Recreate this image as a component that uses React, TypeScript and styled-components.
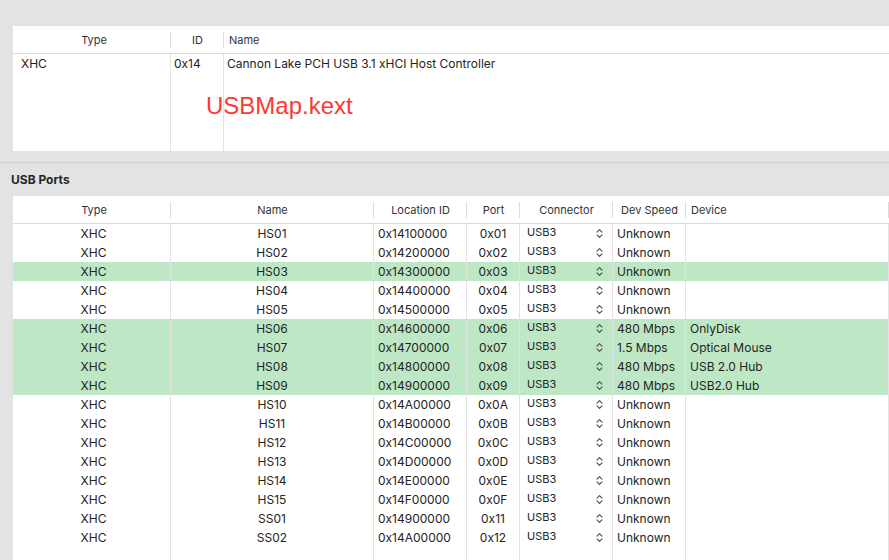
import React from 'react';
import styled, { createGlobalStyle } from 'styled-components';

const GlobalStyle = createGlobalStyle`
  html, body {
    margin: 0;
    padding: 0;
    background: #e3e3e3;
  }
  body {
    font-family: Inter, "Noto Sans", "Liberation Sans", sans-serif;
    -webkit-font-smoothing: antialiased;
  }
`;

type Port = {
  name: string;
  location: string;
  port: string;
  speed: string;
  device: string;
  active?: boolean;
};

const ports: Port[] = [
  { name: 'HS01', location: '0x14100000', port: '0x01', speed: 'Unknown', device: '' },
  { name: 'HS02', location: '0x14200000', port: '0x02', speed: 'Unknown', device: '' },
  { name: 'HS03', location: '0x14300000', port: '0x03', speed: 'Unknown', device: '', active: true },
  { name: 'HS04', location: '0x14400000', port: '0x04', speed: 'Unknown', device: '' },
  { name: 'HS05', location: '0x14500000', port: '0x05', speed: 'Unknown', device: '' },
  { name: 'HS06', location: '0x14600000', port: '0x06', speed: '480 Mbps', device: 'OnlyDisk', active: true },
  { name: 'HS07', location: '0x14700000', port: '0x07', speed: '1.5 Mbps', device: 'Optical Mouse', active: true },
  { name: 'HS08', location: '0x14800000', port: '0x08', speed: '480 Mbps', device: 'USB 2.0 Hub', active: true },
  { name: 'HS09', location: '0x14900000', port: '0x09', speed: '480 Mbps', device: 'USB2.0 Hub', active: true },
  { name: 'HS10', location: '0x14A00000', port: '0x0A', speed: 'Unknown', device: '' },
  { name: 'HS11', location: '0x14B00000', port: '0x0B', speed: 'Unknown', device: '' },
  { name: 'HS12', location: '0x14C00000', port: '0x0C', speed: 'Unknown', device: '' },
  { name: 'HS13', location: '0x14D00000', port: '0x0D', speed: 'Unknown', device: '' },
  { name: 'HS14', location: '0x14E00000', port: '0x0E', speed: 'Unknown', device: '' },
  { name: 'HS15', location: '0x14F00000', port: '0x0F', speed: 'Unknown', device: '' },
  { name: 'SS01', location: '0x14900000', port: '0x11', speed: 'Unknown', device: '' },
  { name: 'SS02', location: '0x14A00000', port: '0x12', speed: 'Unknown', device: '' },
];

const CONTROLLER_COLS = '158px 53px 1fr';
const PORT_COLS = '158px 203px 93px 53px 93px 73px 203px';

function UpDown() {
  return (
    <svg width="7" height="11" viewBox="0 0 7 11" fill="none">
      <polyline points="1,4.2 3.5,1.7 6,4.2" stroke="#4a4a4a" strokeWidth="1.1" strokeLinecap="round" strokeLinejoin="round" />
      <polyline points="1,6.8 3.5,9.3 6,6.8" stroke="#4a4a4a" strokeWidth="1.1" strokeLinecap="round" strokeLinejoin="round" />
    </svg>
  );
}

function App() {
  return (
    <Window>
      <GlobalStyle />
      <ControllerPanel>
        <HeaderRow $cols={CONTROLLER_COLS}>
          <HeadCell $shift={4}>Type</HeadCell>
          <HeadCell>ID</HeadCell>
          <HeadCell $align="left" $last>Name</HeadCell>
        </HeaderRow>
        <Body $cols={CONTROLLER_COLS} $rows={1}>
          <Cell $align="left" $pad={8}>XHC</Cell>
          <Cell $align="left" $pad={3}>0x14</Cell>
          <Cell $align="left" $pad={3} $last>Cannon Lake PCH USB 3.1 xHCI Host Controller</Cell>
          <Filler />
          <Filler />
          <Filler $last />
        </Body>
        <KextNote>USBMap.kext</KextNote>
      </ControllerPanel>

      <SectionTitle>USB Ports</SectionTitle>

      <PortsPanel>
        <HeaderRow $cols={PORT_COLS}>
          <HeadCell $shift={4}>Type</HeadCell>
          <HeadCell>Name</HeadCell>
          <HeadCell>Location ID</HeadCell>
          <HeadCell>Port</HeadCell>
          <HeadCell>Connector</HeadCell>
          <HeadCell>Dev Speed</HeadCell>
          <HeadCell $align="left">Device</HeadCell>
        </HeaderRow>
        <Body $cols={PORT_COLS} $rows={ports.length}>
          {ports.map((p) => (
            <Row key={p.name} $active={p.active}>
              <Cell $pad={4}>XHC</Cell>
              <Cell>{p.name}</Cell>
              <Cell $align="left" $pad={4}>{p.location}</Cell>
              <Cell>{p.port}</Cell>
              <ConnectorCell>
                <span>USB3</span>
                <UpDown />
              </ConnectorCell>
              <Cell $align="left" $pad={4}>{p.speed}</Cell>
              <Cell $align="left" $pad={4}>{p.device}</Cell>
            </Row>
          ))}
          {Array.from({ length: 7 }).map((_, i) => (
            <Filler key={i} />
          ))}
        </Body>
      </PortsPanel>
    </Window>
  );
}

const Window = styled.div`
  width: 889px;
  height: 560px;
  overflow: hidden;
  background: #e3e3e3;
  display: flex;
  flex-direction: column;
  padding-top: 26px;
  box-sizing: border-box;
  color: #242424;
`;

const ControllerPanel = styled.section`
  position: relative;
  margin-left: 13px;
  height: 125px;
  background: #fff;
  display: flex;
  flex-direction: column;
  flex-shrink: 0;
`;

const PortsPanel = styled.section`
  margin-left: 13px;
  flex: 1;
  min-height: 0;
  background: #fff;
  display: flex;
  flex-direction: column;
`;

const SectionTitle = styled.h3`
  margin: 11px 0 0;
  height: 32px;
  padding-bottom: 1px;
  flex-shrink: 0;
  border-top: 1px solid #d0d0d0;
  display: flex;
  align-items: center;
  padding-left: 11px;
  font-size: 12px;
  font-weight: 700;
  color: #262626;
`;

const HeaderRow = styled.div<{ $cols: string }>`
  display: grid;
  grid-template-columns: ${(p) => p.$cols};
  height: 27px;
  border-bottom: 1px solid #dadada;
  flex-shrink: 0;
`;

const HeadCell = styled.div<{ $align?: 'left' | 'center'; $last?: boolean; $shift?: number }>`
  position: relative;
  display: flex;
  align-items: center;
  justify-content: ${(p) => (p.$align === 'left' ? 'flex-start' : 'center')};
  padding-left: ${(p) => (p.$align === 'left' ? 5 : p.$shift ?? 0)}px;
  font-size: 11px;
  color: #333;
  white-space: nowrap;

  &::after {
    content: '';
    display: ${(p) => (p.$last ? 'none' : 'block')};
    position: absolute;
    right: 0;
    top: 6px;
    bottom: 5px;
    width: 1px;
    background: #dcdcdc;
  }
`;

const Body = styled.div<{ $cols: string; $rows: number }>`
  flex: 1;
  display: grid;
  grid-template-columns: ${(p) => p.$cols};
  grid-template-rows: repeat(${(p) => p.$rows}, 19px) 1fr;
`;

const Row = styled.div<{ $active?: boolean }>`
  display: contents;
  & > div {
    background: ${(p) => (p.$active ? '#bee8c5' : 'transparent')};
  }
`;

const Cell = styled.div<{ $align?: 'left' | 'center'; $pad?: number; $last?: boolean }>`
  display: flex;
  align-items: center;
  justify-content: ${(p) => (p.$align === 'left' ? 'flex-start' : 'center')};
  padding-left: ${(p) => p.$pad ?? 0}px;
  font-size: 12px;
  white-space: nowrap;
  border-right: ${(p) => (p.$last ? 'none' : '1px solid #e3e3e3')};
`;

const ConnectorCell = styled.div`
  display: flex;
  align-items: center;
  justify-content: space-between;
  padding: 0 9px 0 7px;
  font-size: 11px;
  border-right: 1px solid #e3e3e3;

  span {
    margin-top: -3px;
  }
`;

const Filler = styled.div<{ $last?: boolean }>`
  border-right: ${(p) => (p.$last ? 'none' : '1px solid #e3e3e3')};
`;

const KextNote = styled.div`
  position: absolute;
  left: 193px;
  top: 68px;
  font-family: "Liberation Sans", Arial, sans-serif;
  font-size: 24px;
  line-height: 24px;
  color: #fb3a35;
`;

export default App;
